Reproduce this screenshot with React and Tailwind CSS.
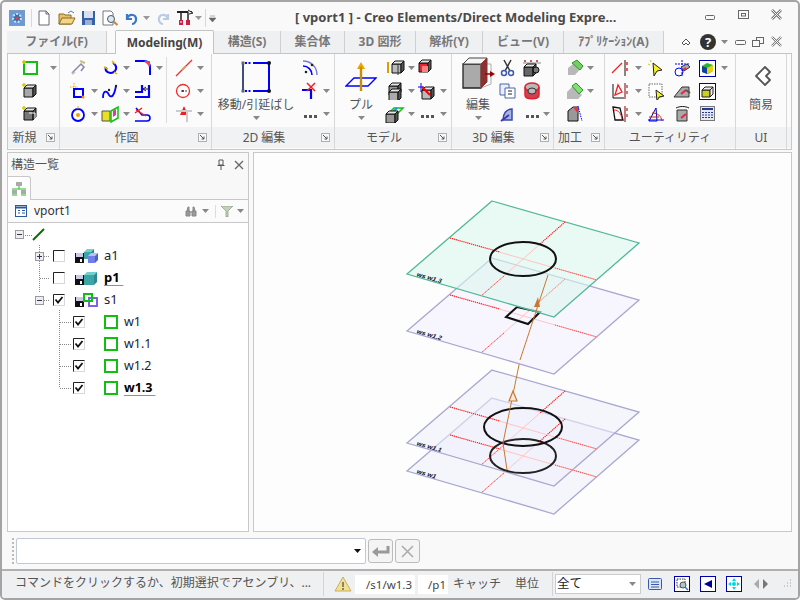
import React from "react";

const S = ({ w = 20, h = 20, children, className = "" }) => (
  <svg width={w} height={h} viewBox={`0 0 ${w} ${h}`} fill="none" className={`block shrink-0 ${className}`}>{children}</svg>
);
const Star = ({ x = 2, y = 2 }) => <path d={`M${x - 2} ${y}h4M${x} ${y - 2}v4`} stroke="#d8c800" strokeWidth="1.5" />;
const Box = ({ x = 4, y = 5, f = "#a8a8a8", s = "#111" }) => (
  <g stroke={s}><path d={`M${x} ${y + 3}h9v9h-9z`} fill={f} /><path d={`M${x} ${y + 3}l3 -3h9l-3 3z`} fill="#e8e8e8" /><path d={`M${x + 9} ${y + 3}l3 -3v9l-3 3z`} fill="#555" /></g>
);

const Caret = ({ c = "#888" }) => <svg width="7" height="4" viewBox="0 0 7 4" className="block"><path d="M0 0h7L3.500 4z" fill={c} /></svg>;

const Launcher = () => (
  <svg width="9" height="9" viewBox="0 0 9 9" className="block shrink-0"><rect x="0.500" y="0.500" width="8" height="8" fill="#f8f8f8" stroke="#b0b0b0" /><path d="M2 2l4 4M6 3.500V6H3.500" stroke="#555" fill="none" /></svg>
);

const Row = ({ icon, caret }) => (
  <div className="h-[23px] flex items-center">
    <div className="w-[20px] flex justify-center">{icon}</div>
    {caret && <div className="flex-1 flex justify-center"><Caret /></div>}
  </div>
);
const Col = ({ w, rows, className = "" }) => (
  <div className={`flex flex-col shrink-0 ${className}`} style={{ width: w }}>
    {rows.map((r, i) => <Row key={i} icon={r[0]} caret={r[1]} />)}
  </div>
);
const Dots = () => <div className="flex gap-[2px] mt-[6px]"><i className="w-[3px] h-[3px] bg-[#555]" /><i className="w-[3px] h-[3px] bg-[#555]" /><i className="w-[3px] h-[3px] bg-[#555]" /></div>;

const Big = ({ w, label, icon, className = "" }) => (
  <div className={`flex flex-col items-center shrink-0 ${className}`} style={{ width: w }}>
    <div className="h-[38px] flex items-end">{icon}</div>
    <div className="text-[12px] leading-[16px] mt-[2px] text-[#555] whitespace-nowrap">{label}</div>
    <div className="mt-[3px]"><Caret /></div>
  </div>
);

const Group = ({ w, label, launcher, children }) => (
  <div className="flex flex-col shrink-0 border-r border-[#d8d8d8]" style={{ width: w }}>
    <div className="h-[71px] flex pt-[3px] bg-[#fbfbfb]">{children}</div>
    <div className={`h-[21px] mt-[2px] bg-[#f1f2f4] flex items-center justify-center relative text-[12px] text-[#555] ${launcher ? "pr-[18px]" : ""}`}>
      {label}
      {launcher && <span className="absolute right-[4px] top-[6px]"><Launcher /></span>}
    </div>
  </div>
);

const Tab = ({ w, children, active }) => (
  <div className={active
    ? "h-[24px] -mb-[1px] mt-[-1px] bg-[#fbfbfb] border border-b-0 border-[#c4c4c4] rounded-t-[2px] flex items-center justify-center text-[12px] font-bold text-[#444] relative z-10"
    : "h-[22px] bg-[#eff0f2] border-r border-[#cfcfcf] flex items-center justify-center text-[12px] font-bold text-[#777]"}
    style={{ width: w }}>{children}</div>
);

const Disk = () => (
  <svg width="9" height="10" viewBox="0 0 9 10" className="block"><path d="M0 0h9v10H0z" fill="#111" /><path d="M1 0h7v4H1z" fill="#c9cbe8" /><path d="M5 6h2v3H5z" fill="#fff" /></svg>
);
const Check = ({ on }) => (
  <svg width="12" height="12" viewBox="0 0 12 12" fill="none" className="block shrink-0"><rect x=".5" y=".5" width="11" height="11" fill="#fff" stroke="#d8d8d8" /><path d="M.5 11.500V.5h11" stroke="#222" />{on && <path d="M2.500 5.500l2.500 3 4.500-5.500" stroke="#111" strokeWidth="1.800" />}</svg>
);
const Tog = ({ m }) => (
  <svg width="9" height="9" viewBox="0 0 9 9" fill="none" className="block"><rect x=".5" y=".5" width="8" height="8" fill="#eee" stroke="#9a9a9a" /><path d="M2 4.500h5" stroke="#335" />{m === "+" && <path d="M4.500 2v5" stroke="#335" />}</svg>
);
const Cube = ({ x = 0, y = 0, s = 10, t = "#6fd0d0", f = "#3aa6a8", r = "#2a8a8c" }) => (
  <g><path d={`M${x} ${y + 3}h${s}v${s}h${-s}z`} fill={f} /><path d={`M${x} ${y + 3}l3 -3h${s}l-3 3z`} fill={t} /><path d={`M${x + s} ${y + 3}l3 -3v${s}l-3 3z`} fill={r} /></g>
);

const Plane = ({ dy, stroke, fill, op, label }) => (
  <g>
    <path d={`M492 ${201 + dy}L639 ${243 + dy}L554 ${317 + dy}L407 ${274 + dy}Z`} fill={fill} fillOpacity={op} stroke={stroke} strokeWidth="1.300" />
    <text transform={`matrix(1 .29 -.5 .85 416 ${276 + dy})`} fontSize="6.500" fontWeight="700" fill="#111" fontFamily="Liberation Sans, sans-serif">{label}</text>
  </g>
);
const Cross = ({ dy }) => (
  <g>
    <path d={`M450 ${238 + dy}L597 ${280 + dy}M565 ${222 + dy}L481 ${296 + dy}`} stroke="#ffc4c4" strokeWidth="1" />
    <path d={`M450 ${238 + dy}L500 ${252 + dy}M565 ${222 + dy}L540 ${244 + dy}`} stroke="#f00" strokeWidth="1.100" strokeDasharray="1 1" />
    <path d={`M555 ${268 + dy}L597 ${280 + dy}M504 ${276 + dy}L481 ${296 + dy}`} stroke="#f33" strokeWidth="1" strokeDasharray="1 1" />
  </g>
);

const TreeRow = ({ h = 22, children, className = "" }) => <div className={`flex items-center ${className}`} style={{ height: h }}>{children}</div>;

const WRow = ({ t, b }) => (
  <TreeRow>
    <span className="ml-[65px]"><Check on /></span>
    <span className="ml-[19px] w-[14px] h-[14px] border-[2px] border-[#10c010] shrink-0" />
    <span className={`ml-[6px] text-[12.500px] ${b ? "font-bold text-black border-b border-[#22dd22] pr-[2px] leading-[15px]" : "text-[#223]"}`}>{t}</span>
  </TreeRow>
);

export default function App() {
  return (
    <div className="w-[800px] h-[600px] overflow-hidden bg-[#f9f9f9] border-2 border-[#a4a4a4] rounded-[5px] flex flex-col text-[#555] font-['Noto_Sans','Noto_Sans_CJK_JP',sans-serif]">
      {/* title bar */}
      <div className="h-[29px] shrink-0 flex items-center relative pt-[1px]">
        <div className="ml-[7px] w-[16px] h-[16px] mt-[2px] border border-[#7a9ac0] bg-[#6a9ad8]">
          <svg width="14" height="14" viewBox="0 0 14 14"><circle cx="7" cy="7" r="4" fill="#3a70a8" stroke="#d0e0f0" strokeWidth="2" strokeDasharray="2 1.500" /><circle cx="7" cy="7" r="1.500" fill="#e04040" /></svg>
        </div>
        <div className="ml-[6px] w-px h-[18px] bg-[#d8d8d8] mt-[2px]" />
        <div className="ml-[5px] mt-[2px] flex items-center">
          <S w={14} h={16}><path d="M2 1h7l3 3v11H2z" fill="#fff" stroke="#667" /><path d="M9 1v3h3" stroke="#667" /></S>
          <S w={18} h={16} className="ml-[7px]"><path d="M1 14V4h5l1 1h6v9z" fill="#e8c068" stroke="#8a6a20" /><path d="M1 14l3-6h13l-3 6z" fill="#f4d488" stroke="#8a6a20" /><path d="M10 3l3-2 3 2" stroke="#4a80c8" /></S>
          <S w={15} h={16} className="ml-[5px]"><rect x="1" y="1" width="13" height="14" fill="#3860a8" /><rect x="3" y="1" width="9" height="7" fill="#d8e0f0" /><rect x="4" y="10" width="7" height="5" fill="#9ab0d0" /></S>
          <S w={18} h={16} className="ml-[5px]"><path d="M2 1h8l2 2v12H2z" fill="#fff" stroke="#778" /><circle cx="10" cy="9" r="3.500" fill="#d8e8f8" stroke="#555" /><path d="M12.500 11.500l4 3.500" stroke="#c08830" strokeWidth="2" /></S>
          <S w={15} h={16} className="ml-[5px]"><path d="M3 4v5h5M3 9c2-6 10-5 9 1 0 2-2 4-4 4" stroke="#3a78c8" strokeWidth="2.200" /></S>
          <span className="ml-[4px]"><Caret c="#999" /></span>
          <S w={15} h={16} className="ml-[6px]"><path d="M12 4v5H7M12 9C10 3 2 4 3 10c0 2 2 4 4 4" stroke="#b8cce8" strokeWidth="2.200" /></S>
          <S w={18} h={18} className="ml-[5px]"><path d="M1 3h15" stroke="#222" strokeWidth="2" /><path d="M5 3v8M12 3v8" stroke="#222" strokeWidth="1.500" /><path d="M12 1l5 3-4 1" fill="#fff" stroke="#222" /><rect x="3" y="11" width="4" height="5" fill="#d02040" /><rect x="10" y="11" width="4" height="5" fill="#d02040" /><path d="M4 13h2" stroke="#fff" /></S>
          <span className="ml-[1px]"><Caret c="#999" /></span>
          <div className="ml-[3px] w-px h-[18px] bg-[#d8d8d8]" />
          <svg width="7" height="7" viewBox="0 0 7 7" className="ml-[3px] block"><path d="M1 1h5M0 3h7L3.500 7z" fill="#666" stroke="#666" strokeWidth=".5" /></svg>
        </div>
        <div className="absolute left-[293px] top-[7px] text-[13px] leading-[17px] font-bold text-[#4a4a4a] whitespace-nowrap">[ vport1 ] - Creo Elements/Direct Modeling Expre...</div>
        <div className="absolute right-[14px] top-[6px] flex items-center">
          <S w={14} h={14}><rect x="2.500" y="7.500" width="9" height="4" stroke="#666" rx="1" /></S>
          <S w={14} h={14} className="ml-[20px]"><rect x="1.500" y="2.500" width="10" height="8" stroke="#666" /><rect x="4.500" y="5.500" width="4" height="2.500" stroke="#666" /></S>
          <S w={14} h={14} className="ml-[19px]"><path d="M2 2l9 9M11 2l-9 9" stroke="#777" strokeWidth="2.600" /><path d="M2 2l9 9M11 2l-9 9" stroke="#f4f4f4" strokeWidth="1" /></S>
        </div>
      </div>

      {/* tabs */}
      <div className="h-[22px] shrink-0 flex px-[5px] relative">
        <Tab w={100}>ファイル(F)</Tab>
        <div className="w-[8px] shrink-0" />
        <Tab w={99} active>Modeling(M)</Tab>
        <Tab w={67}>構造(S)</Tab>
        <Tab w={64}>集合体</Tab>
        <Tab w={71}>3D 図形</Tab>
        <Tab w={67}>解析(Y)</Tab>
        <Tab w={81}>ビュー(V)</Tab>
        <Tab w={100}>ｱﾌﾟﾘｹｰｼｮﾝ(A)</Tab>
        <div className="flex items-center ml-[17px]">
          <S w={10} h={10}><path d="M1 6l4-4 4 4-2 2-2-2-2 2z" fill="#fff" stroke="#555" /></S>
          <div className="ml-[9px] w-[16px] h-[16px] rounded-full bg-[#333] text-white text-[13px] font-bold flex items-center justify-center leading-none">?</div>
          <span className="ml-[5px]"><Caret /></span>
          <S w={12} h={12} className="ml-[6px]"><rect x="1.500" y="4.500" width="10" height="4" stroke="#666" rx="1" /></S>
          <S w={12} h={12} className="ml-[6px]"><rect x="4.500" y="1.500" width="7" height="6" stroke="#666" /><rect x=".5" y="4.500" width="7" height="6" fill="#f9f9f9" stroke="#666" /></S>
          <S w={12} h={12} className="ml-[7px]"><path d="M1 1l9 9M10 1l-9 9" stroke="#777" strokeWidth="2.400" /><path d="M1 1l9 9M10 1l-9 9" stroke="#f4f4f4" strokeWidth="1" /></S>
        </div>
      </div>

      {/* ribbon */}
      <div className="h-[97px] shrink-0 mx-[5px] mr-[6px] border border-[#c8c8c8] border-t-[#c4c4c4] flex bg-[#fbfbfb]">
        <Group w={52} label="新規" launcher>
          <Col w={46} className="ml-[12px]" rows={[
            [<S w={18} h={18}><rect x="3" y="3" width="13" height="12" stroke="#10c010" strokeWidth="2" /><Star x={3} y={3} /></S>, true],
            [<S w={18} h={18}><Box x={3} y={3} /><Star x={3} y={3} /></S>],
            [<S w={18} h={18}><Box x={3} y={3} f="#777" /><path d="M8 8h6v6" stroke="#fff" /><Star x={3} y={3} /></S>],
          ]} />
        </Group>
        <Group w={152} label="作図" launcher>
          <Col w={32} className="ml-[8px]" rows={[
            [<S w={18} h={18}><path d="M3 14L12 5l3 3-3 4" stroke="#8888a8" strokeWidth="1.500" /><path d="M11 2l5 2" stroke="#c8c088" strokeWidth="2" /><path d="M3 15l3-2" stroke="#c0c0c0" strokeWidth="2" /></S>],
            [<S w={18} h={18}><rect x="5" y="7" width="9" height="8" stroke="#00f" strokeWidth="2" /><path d="M5 1v5M1 5h8" stroke="#e0b000" strokeDasharray="1.500 1" /><circle cx="14" cy="15" r="1.500" fill="#f80" /></S>, true],
            [<S w={18} h={18}><circle cx="9" cy="10" r="6" stroke="#00f" strokeWidth="1.800" /><circle cx="9" cy="10" r="2" fill="#f0a000" /><path d="M9 1v3" stroke="#e0b000" /></S>, true],
          ]} />
          <Col w={33} rows={[
            [<S w={18} h={18}><path d="M5 8c-2 5 5 8 9 4 2-3 1-6-2-8" stroke="#00f" strokeWidth="2" /><path d="M3 8l4 2M11 2l3 3M13 13l3 2" stroke="#e0b000" strokeWidth="1.500" /></S>, true],
            [<S w={18} h={18}><path d="M2 16c0-8 4-8 6-3 2 3 5 2 7-9" stroke="#00f" strokeWidth="1.800" /><circle cx="8" cy="8" r="1.200" fill="#222" /><circle cx="15" cy="4" r="1.200" fill="#222" /></S>, true],
            [<S w={18} h={18}><path d="M1 6h8v10H1z" fill="#e8e020" stroke="#555" /><path d="M10 6l7-4v11l-7 4z" fill="#fff" stroke="#10c010" strokeWidth="1.500" /><path d="M12 6l3-2v6l-3 2z" fill="#e04080" /></S>, true],
          ]} />
          <Col w={33} rows={[
            [<S w={18} h={18}><path d="M1 2h9c4 0 6 3 6 7v7" stroke="#00f" strokeWidth="2" /><path d="M10 2h6v6z" fill="#f04040" /></S>, true],
            [<S w={18} h={18}><path d="M1 15h14V3" stroke="#00f" strokeWidth="2.200" /><path d="M1 10h7V3" stroke="#00f" strokeWidth="2.200" /><path d="M9 7h6M9 7l3-2M9 7l3 2" stroke="#222" /></S>],
            [<S w={18} h={18}><path d="M1 16h12c4 0 4-6 0-6H8L2 3" stroke="#00f" strokeWidth="1.600" /><path d="M1 8l7-5M2 5l10 6" stroke="#f02020" strokeWidth="1.300" /></S>],
          ]} />
          <div className="w-px h-[66px] bg-[#dcdcdc]" />
          <Col w={33} className="ml-[7px]" rows={[
            [<S w={18} h={18}><path d="M1 17L17 1" stroke="#f03030" strokeWidth="1.300" /><path d="M7 11l4-4" stroke="#c8a070" strokeWidth="2" /></S>, true],
            [<S w={18} h={18}><circle cx="8" cy="9" r="6.500" stroke="#f03030" strokeWidth="1.300" /><path d="M6 9h7" stroke="#444" strokeWidth="1" strokeDasharray="2 2" /><circle cx="8" cy="9" r="1" fill="#222" /></S>, true],
            [<S w={18} h={18}><path d="M9 1l4 9H5z" fill="#f02020" /><path d="M1 6h16M12 6v11" stroke="#ccc" strokeWidth="2" /></S>, true],
          ]} />
        </Group>
        <Group w={123} label="2D 編集" launcher>
          <div className="flex w-[88px] shrink-0">
            <Big w={88} label="移動/引延ばし" icon={
              <S w={34} h={34} className="mb-[1px]"><path d="M4 3v28" stroke="#3c5078" strokeWidth="2" /><path d="M30 3v28" stroke="#00f" strokeWidth="2" /><path d="M6 3h7M6 31h7" stroke="#00f" strokeWidth="2" strokeDasharray="2 1.500" /><path d="M14 3h16M14 31h16" stroke="#00f" strokeWidth="2" /><rect x="2.500" y="1.500" width="3" height="3" fill="#667" /><rect x="2.500" y="29.500" width="3" height="3" fill="#667" /><circle cx="30" cy="3" r="2" fill="#111" /><circle cx="30" cy="31" r="2" fill="#111" /></S>
            } />
          </div>
          <Col w={33} rows={[
            [<S w={18} h={18}><path d="M2 2c8 0 14 6 14 14" stroke="#7a7ae0" strokeWidth="1.400" /><path d="M2 7c5 0 9 4 9 9" stroke="#00f" strokeWidth="1.600" /><circle cx="11" cy="6" r="1.300" fill="#222" /><circle cx="5" cy="13" r="1.300" fill="#222" /></S>],
            [<S w={18} h={18}><path d="M1 8h9v9" stroke="#00f" strokeWidth="2.200" /><path d="M6 1l8 8M14 1l-8 8" stroke="#f02020" strokeWidth="1.500" /></S>, true],
            [<Dots />, true],
          ]} />
        </Group>
        <Group w={117} label="モデル" launcher>
          <Big w={52} label="プル" icon={
            <S w={32} h={36}><path d="M1 27L9 19h22l-8 8z" stroke="#00f" strokeWidth="1.300" fill="#fff" /><path d="M16 3l-4 7h8z" fill="#f0a000" /><path d="M16 8v24" stroke="#c89000" strokeWidth="2.400" /></S>
          } />
          <Col w={32} className="ml-[-2px]" rows={[
            [<S w={20} h={18}><Box x={7} y={2} f="#bbb" /><path d="M3 3v11" stroke="#d8a000" strokeWidth="2" /><path d="M13 5v11" stroke="#333" /></S>, true],
            [<S w={20} h={18}><Box x={4} y={1} f="#999" /><Box x={4} y={7} f="#aaa" /></S>, true],
            [<S w={20} h={18}><path d="M3 9L9 3h9l-6 6z" fill="#fff" stroke="#10c010" strokeWidth="1.500" /><path d="M7 8l5-5" stroke="#00a0ff" strokeWidth="2" /><Box x={1} y={6} f="#999" /></S>, true],
          ]} />
          <Col w={32} rows={[
            [<S w={18} h={18}><Box x={1} y={1} f="#f02030" /><rect x="4" y="7" width="6" height="6" fill="#ff8080" /></S>],
            [<S w={20} h={18}><path d="M4 1v9h6M1 5h6" stroke="#00f" /><Box x={5} y={5} f="#bbb" /><path d="M5 5l8 8" stroke="#f00000" strokeWidth="2" /></S>, true],
            [<Dots />, true],
          ]} />
        </Group>
        <Group w={102} label="3D 編集" launcher>
          <Big w={44} className="ml-[4px]" label="編集" icon={
            <S w={34} h={34} className="mb-[5px]"><path d="M2 8h18v24H2z" fill="#aaa" stroke="#222" strokeWidth="1.300" /><path d="M2 8l6-6h18l-6 6z" fill="#f4f4f4" stroke="#444" /><path d="M20 8h10v20l-10 4z" fill="#fff" stroke="#aaa" /><path d="M20 32V8l6-6v24z" fill="#8c3030" stroke="#8c3030" strokeWidth="1" /><path d="M24 18h6" stroke="#900" strokeWidth="1.500" /><path d="M34 18l-5-3v6z" fill="#900" /></S>
          } />
          <Col w={24} className="ml-[-2px]" rows={[
            [<S w={18} h={18}><path d="M5 1l6 11M12 1L6 12" stroke="#333" strokeWidth="1.500" /><circle cx="5" cy="14" r="2.500" stroke="#3a5aa8" strokeWidth="1.500" /><circle cx="12" cy="14" r="2.500" stroke="#3a5aa8" strokeWidth="1.500" /></S>],
            [<S w={18} h={18}><path d="M1 2h9v11H1z" fill="#eef" stroke="#46a" /><path d="M6 6h10v10H6z" fill="#fff" stroke="#46a" /><path d="M9 9h4M9 12h4" stroke="#222" /></S>],
            [<S w={18} h={18}><path d="M4 15c0-6 3-11 9-11v11z" fill="#aab4e0" stroke="#3a4aa8" strokeWidth="1.500" /><path d="M2 16l8-6" stroke="#3a3ab8" strokeWidth="2" /></S>],
          ]} />
          <Col w={29} rows={[
            [<S w={18} h={18}><path d="M2 1v2M8 1v2M14 1v2" stroke="#c02020" strokeWidth="1.500" /><path d="M0 4h18" stroke="#888" /><Box x={1} y={5} f="#666" /><circle cx="13" cy="11" r="3" fill="#777" stroke="#111" /></S>],
            [<S w={18} h={18}><path d="M2 5v8c0 5 14 5 14 0V5" fill="#d04050" stroke="#e02030" strokeWidth="1.500" /><ellipse cx="9" cy="5" rx="7" ry="4" fill="#b8b8b8" stroke="#e02030" strokeWidth="1.500" /><ellipse cx="9" cy="9" rx="4" ry="3" fill="#bbb" stroke="#333" /></S>],
            [<Dots />, true],
          ]} />
        </Group>
        <Group w={51} label="加工" launcher>
          <Col w={30} className="ml-[11px]" rows={[
            [<S w={18} h={18}><path d="M2 9l9-7 6 5-8 9H2z" fill="#b8b8b8" /><path d="M6 4l5-3 6 6-3 4z" fill="#70d060" stroke="#2a9a2a" /></S>, true],
            [<S w={18} h={18}><path d="M1 10l6-6 9 9-4 4H1z" fill="#b8b8b8" /><path d="M6 4l4-3 7 7-4 4z" fill="#80e070" stroke="#2a9a2a" /></S>, true],
            [<S w={18} h={18}><path d="M2 6l5-4h5v14H2z" fill="#999" stroke="#111" /><path d="M7 2l5 0v7z" fill="#f03040" /><path d="M12 1l4 15" stroke="#00f" strokeDasharray="1.500 1" /></S>],
          ]} />
        </Group>
        <Group w={131} label="ユーティリティ">
          <Col w={36} className="ml-[5px]" rows={[
            [<S w={18} h={18}><path d="M1 14L11 4" stroke="#f02020" strokeWidth="1.300" /><path d="M14 1v16" stroke="#111" /><path d="M16 3v3M16 9v3" stroke="#f02020" strokeWidth="1.500" /></S>, true],
            [<S w={18} h={18}><path d="M2 2v14h11" stroke="#111" /><path d="M4 13l3-10 4 7z" stroke="#f02020" strokeWidth="1.300" /><path d="M14 1v16M16 3v3M16 9v3" stroke="#800" /></S>, true],
            [<S w={18} h={18}><path d="M2 2l7 1 3 12H4z" stroke="#111" strokeWidth="1.300" /><path d="M3 5c5 0 7 4 8 9" stroke="#f02020" /><path d="M14 1v16M16 3v3M16 9v3" stroke="#800" /></S>, true],
          ]} />
          <Col w={26} rows={[
            [<S w={18} h={18}><path d="M6 4l9 7-5 1-3 5z" fill="#f8f020" stroke="#222" /><path d="M3 1l1 2M1 5l2 1" stroke="#d8c800" /></S>],
            [<S w={18} h={18}><rect x="2" y="2" width="13" height="13" fill="#fff" stroke="#666" strokeDasharray="1.500 1" /><path d="M9 8l8 6-5 1-2 4z" fill="#f8f020" stroke="#222" /></S>],
            [<S w={18} h={18}><path d="M2 16l7-13 1 13z" stroke="#00a" /><path d="M1 15h16" stroke="#00f" /><path d="M2 12h10M5 8c6 0 9 3 10 8" stroke="#c02020" /></S>],
          ]} />
          <Col w={25} rows={[
            [<S w={18} h={18}><path d="M9 1v16M2 5h14" stroke="#00f" strokeDasharray="2 1" /><circle cx="6" cy="13" r="4" stroke="#00f" /><path d="M8 8l6-3 3 3-6 4z" fill="#aaa" stroke="#333" /><path d="M10 11l3-2" stroke="#f02040" strokeWidth="2" /></S>],
            [<S w={18} h={18}><path d="M1 15l8-10h7v10z" fill="#aaa" stroke="#333" /><path d="M8 12l5-4" stroke="#f02040" strokeWidth="2" /><path d="M13 8l4 3" stroke="#555" strokeWidth="2" /></S>],
            [<S w={18} h={18}><path d="M3 3c4-2 9-2 13 0" stroke="#111" /><path d="M4 5h10v11H4z" fill="#aaa" stroke="#333" /><path d="M8 13l5-4" stroke="#f02040" strokeWidth="2" /></S>],
          ]} />
          <Col w={34} rows={[
            [<S w={17} h={17}><rect x=".5" y=".5" width="16" height="16" stroke="#00a" /><path d="M3 6l5-3 6 2v6l-5 3-6-2z" fill="#30b030" /><path d="M3 6l5 2v6l-5-2z" fill="#1040a0" /><path d="M8 8l6-3v6l-6 3z" fill="#e8d010" /></S>, true],
            [<S w={17} h={17}><rect x=".5" y=".5" width="16" height="16" fill="#fff" stroke="#00a" /><path d="M3 7h8v7H3z" fill="#c8d020" stroke="#222" /><path d="M3 7l3-3h8l-3 3zM11 7l3-3v7l-3 3z" fill="#eee" stroke="#222" /></S>],
            [<S w={17} h={17}><rect x="1.500" y="1.500" width="14" height="14" fill="#e8e8f4" stroke="#777" /><path d="M3 4h11" stroke="#223a90" strokeWidth="2" /><path d="M3 7.500h11M3 10h11M3 12.500h11" stroke="#223a90" strokeDasharray="2 1" /></S>],
          ]} />
        </Group>
        <Group w={51} label="UI">
          <div className="w-[50px] shrink-0 flex flex-col items-center">
            <div className="h-[38px] flex items-start pt-[9px]">
              <S w={20} h={20}><path d="M14 1L5 10l9 9 5-5-4-4 4-4z" stroke="#555" strokeWidth="1.800" fill="#fff" strokeLinejoin="round" /></S>
            </div>
            <div className="text-[12px] leading-[16px] mt-[2px] text-[#555]">簡易</div>
          </div>
        </Group>
        <div className="flex-1 flex flex-col"><div className="h-[71px]" /><div className="h-[21px] mt-[2px] bg-[#f1f2f4]" /></div>
      </div>

      {/* main */}
      <div className="h-[380px] shrink-0 mt-[2px] pl-[5px] pr-[6px] flex gap-[4px]">
        <div className="w-[242px] shrink-0 border border-[#c8c8c8] bg-white flex flex-col">
          <div className="h-[23px] shrink-0 bg-[#f8f8f8] flex items-center pl-[3px] text-[12px] text-[#555]">
            <span>構造一覧</span>
            <span className="ml-auto"><S w={10} h={11}><path d="M3 1h4v5H3zM1.500 6.500h7M5 7v4" stroke="#555" /></S></span>
            <span className="ml-[8px] mr-[4px]"><S w={10} h={10}><path d="M1 1l8 8M9 1l-8 8" stroke="#666" strokeWidth="1.300" /></S></span>
          </div>
          <div className="h-[24px] shrink-0 flex border-b border-[#c8c8c8] bg-[#f8f8f8]">
            <div className="w-[23px] h-[24px] bg-white border border-b-0 border-t-[#c8c8c8] border-r-[#c8c8c8] border-l-0 rounded-tr-[3px] flex items-center justify-center">
              <S w={16} h={15}><rect x="5" y="1" width="6" height="4" fill="#aaa" /><rect x="1" y="9" width="5" height="4" fill="#aaa" /><rect x="10" y="9" width="5" height="4" fill="#aaa" /><path d="M8 5v3M1 8h14M1 14h5M10 14h5" stroke="#22c022" /></S>
            </div>
          </div>
          <div className="h-[23px] shrink-0 flex items-center border-b border-[#c8c8c8] bg-[#fbfbfb]">
            <span className="ml-[7px]"><S w={12} h={12}><rect x=".5" y=".5" width="11" height="11" fill="#fff" stroke="#2a5aa0" /><path d="M1 2.500h10" stroke="#2a5aa0" strokeWidth="2" /><path d="M3 5.500h2M7 5.500h3M3 8h2M7 8h3" stroke="#2a5aa0" /></S></span>
            <span className="ml-[7px] text-[12px] text-[#333]">vport1</span>
            <span className="ml-auto"><S w={12} h={11}><path d="M1 5h4v5H1zM7 5h4v5H7zM2 5l1-4h1v4M8 5V1h1l1 4" fill="#999" stroke="#888" /><path d="M5 6h2" stroke="#888" /></S></span>
            <span className="ml-[5px]"><Caret /></span>
            <div className="ml-[6px] w-px h-[13px] bg-[#ddd]" />
            <span className="ml-[5px]"><S w={12} h={11}><path d="M0 0h12L7 5v6H5V5z" fill="#c4cfbc" stroke="#8a9a80" strokeWidth=".7" /></S></span>
            <span className="ml-[4px] mr-[4px]"><Caret /></span>
          </div>
          <div className="flex-1 relative pt-[1px] text-[13px]">
            <svg className="absolute left-0 top-0" width="80" height="170" fill="none"><path d="M17 12.500H24M31.500 22V70M36 33.500H42M32 55.500H42M36 77.500H42M51.500 87V165M52 99.500H63M52 121.500H63M52 143.500H63M52 165.500H63" stroke="#888" strokeDasharray="1 1" /></svg>
            <TreeRow h={21} className="relative">
              <span className="ml-[7px]"><Tog m="-" /></span>
              <span className="ml-[8px]"><S w={13} h={13}><path d="M1 12L12 1" stroke="#0a6a0a" strokeWidth="2" /></S></span>
            </TreeRow>
            <TreeRow className="relative">
              <span className="ml-[27px]"><Tog m="+" /></span>
              <span className="ml-[9px]"><Check /></span>
              <span className="ml-[10px] mt-[3px]"><Disk /></span>
              <span className="ml-[-1px]"><S w={15} h={15}><Cube x={1} y={0} s={7} /><Cube x={5} y={4} s={7} t="#b8c0f8" f="#7080e8" r="#5060c0" /></S></span>
              <span className="ml-[6px] text-[#223]">a1</span>
            </TreeRow>
            <TreeRow className="relative">
              <span className="ml-[45px]"><Check /></span>
              <span className="ml-[10px] mt-[3px]"><Disk /></span>
              <span className="ml-[-1px]"><S w={15} h={15}><Cube x={1} y={1} s={10} /></S></span>
              <span className="ml-[6px] font-bold text-black border-b border-[#22dd22] pr-[3px] leading-[15px]">p1</span>
            </TreeRow>
            <TreeRow className="relative">
              <span className="ml-[27px]"><Tog m="-" /></span>
              <span className="ml-[9px]"><Check on /></span>
              <span className="ml-[10px] mt-[3px]"><Disk /></span>
              <span className="ml-[-1px]"><S w={15} h={15}><rect x="6" y="5" width="8" height="8" stroke="#8060f0" strokeWidth="2" /><rect x="1" y="1" width="8" height="7" stroke="#10c010" strokeWidth="2" /></S></span>
              <span className="ml-[6px] text-[#223]">s1</span>
            </TreeRow>
            <div className="relative">
              <WRow t="w1" />
              <WRow t="w1.1" />
              <WRow t="w1.2" />
              <WRow t="w1.3" b />
            </div>
          </div>
        </div>

        <div className="flex-1 border border-[#c8c8c8] bg-[#fdfdfd]">
          <svg width="537" height="378" viewBox="254 153 537 378" className="block" fill="none">
            <Plane dy={197} stroke="#a8a8d0" fill="#eeeefc" op={0.55} label="ws w1" />
            <Plane dy={169} stroke="#a8a8d0" fill="#eeeefc" op={0.55} label="ws w1.1" />
            <Cross dy={197} />
            <Cross dy={169} />
            <ellipse cx="523" cy="456" rx="33" ry="17" stroke="#222" strokeWidth="2" />
            <ellipse cx="523" cy="427" rx="39" ry="19" stroke="#111" strokeWidth="2" />
            <path d="M520 360L503 443L507 470" stroke="#c87830" strokeWidth="1" />
            <path d="M513 391l-4 10h8z" fill="#f8e8d8" stroke="#c87830" strokeWidth="1.200" />
            <Plane dy={57} stroke="#a8a8d0" fill="#f7f6ff" op={1} label="ws w1.2" />
            <Cross dy={57} />
            <path d="M506 317L517 307L540 312L528 324Z" stroke="#111" strokeWidth="2" />
            <Plane dy={0} stroke="#52b898" fill="#dcf7ef" op={0.6} label="ws w1.3" />
            <Cross dy={0} />
            <ellipse cx="523" cy="259" rx="33" ry="17" stroke="#111" strokeWidth="2" />
            <path d="M548 275L520 360" stroke="#c87830" strokeWidth="1" />
            <path d="M538 297l-4 10h6z" fill="#c87830" />
          </svg>
        </div>
      </div>

      {/* command row */}
      <div className="h-[37px] shrink-0 flex items-center pl-[10px] pt-[1px]">
        <div className="w-[2px] h-[26px] border-l-2 border-dotted border-[#bbb]" />
        <div className="ml-[2px] w-[350px] h-[26px] bg-white border border-[#c0c8d4] rounded-[2px] flex items-center justify-end pr-[4px]">
          <svg width="7" height="4" viewBox="0 0 7 4" className="block"><path d="M0 0h7L3.500 4z" fill="#111" /></svg>
        </div>
        <div className="ml-[2px] w-[25px] h-[24px] border border-[#bbb] rounded-[3px] bg-[#f4f4f4] flex items-center justify-center">
          <S w={20} h={14}><path d="M17 2v6H5" stroke="#999" strokeWidth="3" /><path d="M1 8l6-5v10z" fill="#999" /></S>
        </div>
        <div className="ml-[2px] w-[25px] h-[24px] border border-[#bbb] rounded-[3px] bg-[#f4f4f4] flex items-center justify-center">
          <S w={13} h={13}><path d="M1 1l11 11M12 1L1 12" stroke="#aaa" strokeWidth="1.500" /></S>
        </div>
      </div>

      {/* status bar */}
      <div className="flex-1 border-t-2 border-[#b0b0b0] bg-[#eef0f2] flex items-center text-[12px] text-[#555] pb-[1px]">
        <div className="w-[322px] pl-[13px] whitespace-nowrap overflow-hidden border-r border-[#d4d4d4] h-[24px] leading-[22px] shrink-0">コマンドをクリックするか、初期選択でアセンブリ、...</div>
        <span className="ml-[10px]"><S w={18} h={16}><path d="M9 1l8 14H1z" fill="#f4e090" stroke="#c8b060" strokeLinejoin="round" /><path d="M9 6v5M9 12v2" stroke="#665" strokeWidth="1.500" /></S></span>
        <div className="ml-[3px] w-[60px] h-[19px] bg-white text-right pr-[3px] text-[#444] text-[11.500px] leading-[19px]">/s1/w1.3</div>
        <div className="ml-[3px] w-[30px] h-[19px] bg-white text-right pr-[2px] text-[#444] text-[11.500px] leading-[19px]">/p1</div>
        <span className="ml-[5px]">キャッチ</span>
        <span className="ml-[14px]">単位</span>
        <div className="ml-[13px] w-px h-[24px] bg-[#d4d4d4]" />
        <div className="ml-[2px] w-[86px] h-[20px] bg-white border border-[#ccc] flex items-center pl-[1px] text-[#222] text-[12.500px]">全て<span className="ml-auto mr-[4px]"><Caret /></span></div>
        <span className="ml-[6px]"><S w={16} h={14}><rect x="1.500" y="1.500" width="13" height="11" rx="1" fill="#dde6f8" stroke="#3a5aa8" /><path d="M4 5h8M4 7.500h8M4 10h8" stroke="#3a5aa8" /></S></span>
        <span className="ml-[11px]"><S w={16} h={16}><rect x=".5" y=".5" width="15" height="15" fill="#fff" stroke="#00a" /><rect x="3" y="3" width="8" height="8" stroke="#333" strokeDasharray="1.500 1" /><circle cx="9" cy="9" r="3" fill="#a8c8d8" stroke="#555" /><path d="M11 11l3 3" stroke="#2080d0" strokeWidth="1.500" /></S></span>
        <span className="ml-[10px]"><S w={16} h={16}><rect x=".5" y=".5" width="15" height="15" fill="#fff" stroke="#00a" /><path d="M4 8l8-4v8z" fill="#000090" /></S></span>
        <span className="ml-[10px]"><S w={16} h={16}><rect x=".5" y=".5" width="15" height="15" fill="#fff" stroke="#00a" /><path d="M8 2l2 3H6zM8 14l2-3H6zM2 8l3-2v4zM14 8l-3-2v4z" fill="#00d8e0" /><circle cx="8" cy="8" r="2" fill="#00d8e0" /></S></span>
        <span className="ml-[11px]"><S w={16} h={12}><path d="M6 1v10L1 6z" fill="#aaa" /><path d="M10 1v10l5-5z" fill="#777" /></S></span>
        <span className="ml-[13px]"><S w={10} h={10}><path d="M8 1h1M5 4h1M8 4h1M2 7h1M5 7h1M8 7h1" stroke="#bbb" strokeWidth="1.500" /></S></span>
      </div>
    </div>
  );
}
